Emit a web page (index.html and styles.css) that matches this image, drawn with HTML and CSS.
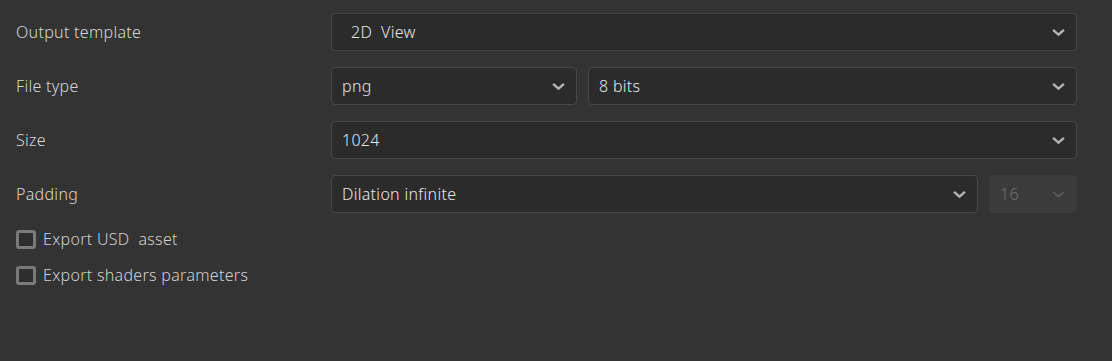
FILE: index.html
```html
<!DOCTYPE html>
<html lang="en">
<head>
  <meta charset="UTF-8" />
  <title>Export settings</title>
  <link rel="stylesheet" href="styles.css">
</head>
<body>
  <div class="panel">
    <div class="row">
      <span class="label">Output template</span>
      <div class="fields">
        <div class="select grow"><span class="value indent">2D  View</span><svg class="chev" viewBox="0 0 12 8"><path d="M1 1.5 L6 6 L11 1.5"/></svg></div>
      </div>
    </div>

    <div class="row">
      <span class="label">File type</span>
      <div class="fields">
        <div class="select type"><span class="value">png</span><svg class="chev" viewBox="0 0 12 8"><path d="M1 1.5 L6 6 L11 1.5"/></svg></div>
        <div class="select grow"><span class="value">8 bits</span><svg class="chev" viewBox="0 0 12 8"><path d="M1 1.5 L6 6 L11 1.5"/></svg></div>
      </div>
    </div>

    <div class="row">
      <span class="label">Size</span>
      <div class="fields">
        <div class="select grow"><span class="value">1024</span><svg class="chev" viewBox="0 0 12 8"><path d="M1 1.5 L6 6 L11 1.5"/></svg></div>
      </div>
    </div>

    <div class="row">
      <span class="label">Padding</span>
      <div class="fields">
        <div class="select grow"><span class="value">Dilation infinite</span><svg class="chev" viewBox="0 0 12 8"><path d="M1 1.5 L6 6 L11 1.5"/></svg></div>
        <div class="select disabled"><span class="value">16</span><svg class="chev" viewBox="0 0 12 8"><path d="M1 1.5 L6 6 L11 1.5"/></svg></div>
      </div>
    </div>

    <div class="checks">
      <label class="check"><span class="box"></span><span class="check-text">Export USD  asset</span></label>
      <label class="check"><span class="box"></span><span class="check-text">Export shaders parameters</span></label>
    </div>
  </div>
</body>
</html>
```

FILE: styles.css
```css
* {
  margin: 0;
  padding: 0;
  box-sizing: border-box;
}

body {
  background: #333333;
  color: #d6d6d6;
  font-family: "Noto Sans", sans-serif;
  font-size: 16px;
  font-weight: 300;
  letter-spacing: 0.3px;
  width: 1112px;
  height: 361px;
  overflow: hidden;
}

.panel {
  padding: 13px 35px 0 16px;
  display: flex;
  flex-direction: column;
  gap: 16px;
}

.row {
  display: flex;
  align-items: center;
  height: 38px;
}

.label {
  width: 315px;
  flex-shrink: 0;
}

.fields {
  flex: 1;
  display: flex;
  gap: 11px;
  height: 100%;
}

.select {
  height: 38px;
  display: flex;
  align-items: center;
  justify-content: space-between;
  padding: 0 9px 0 10px;
  background: #2b2b2b;
  border: 1px solid #474747;
  border-radius: 4px;
  color: #e6e6e6;
}

.grow {
  flex: 1;
}

.type {
  width: 246px;
}

.disabled {
  width: 88px;
  background: #3b3b3b;
  border-color: #3b3b3b;
  color: #6e6e6e;
}

.value {
  white-space: pre;
}

.indent {
  padding-left: 9px;
}

.chev {
  width: 13px;
  height: 9px;
  fill: none;
  stroke: #b4b4b4;
  stroke-width: 2.2;
  margin-right: 2px;
}

.disabled .chev {
  stroke: #5c5c5c;
  stroke-width: 1.5;
}

.checks {
  display: flex;
  flex-direction: column;
  gap: 16px;
  margin-top: 0;
}

.check {
  display: flex;
  align-items: center;
  gap: 7px;
  height: 20px;
}

.box {
  width: 20px;
  height: 19px;
  border: 3px solid #7a7a7a;
  border-radius: 3px;
  background: #2e2e2e;
}

.check-text {
  white-space: pre;
  color: #d0d0d0;
}
```
